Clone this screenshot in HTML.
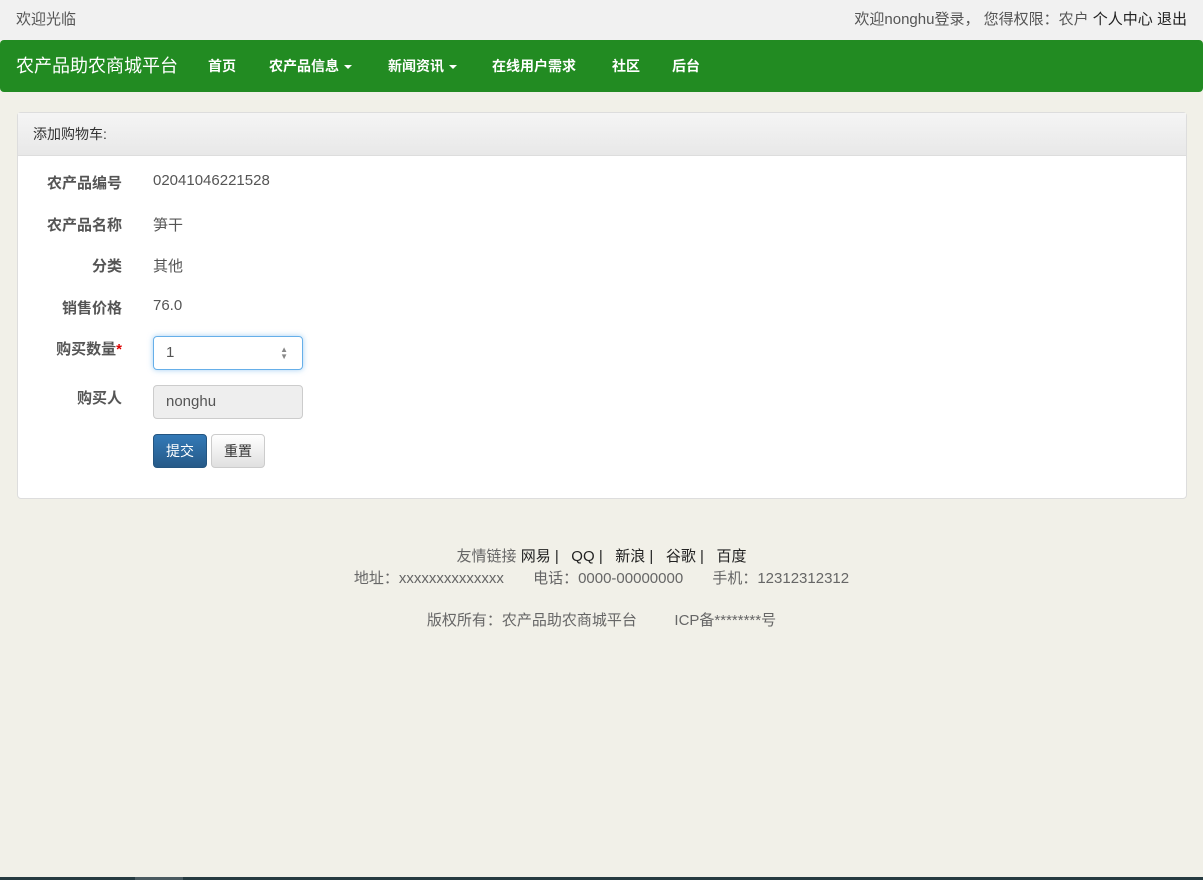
<!DOCTYPE html>
<html><head><meta charset="utf-8"><style>
*{box-sizing:border-box;margin:0;padding:0}
body{width:1203px;height:880px;background:#f1f0e8;font-family:"Liberation Sans","Noto Sans CJK SC",sans-serif;font-size:15px;color:#555;position:relative;overflow:hidden}
.top{height:40px;background:#f1f1f1;line-height:40px;padding:0 16px;color:#555}
.top .r{position:absolute;right:16px;top:0;color:#555}
.top .r a{color:#222}
.nav{position:absolute;top:40px;left:0;width:1203px;height:52px;background:#228b22;border-radius:4px;color:#fff}
.nav .brand{position:absolute;left:16px;top:0;line-height:52px;font-size:18px}
.nav .it{position:absolute;top:0;line-height:52px;font-size:14px;font-weight:bold}
.caret{display:inline-block;width:0;height:0;border-left:4px solid transparent;border-right:4px solid transparent;border-top:4px solid #fff;vertical-align:middle;margin-left:5px}
.panel{position:absolute;left:17px;top:112px;width:1170px;height:387px;background:#fff;border:1px solid #ddd;border-radius:4px}
.ph{height:43px;background:linear-gradient(#f5f5f5,#e8e8e8);border-bottom:1px solid #ddd;line-height:42px;padding-left:15px;color:#333;font-size:14px}
.lbl{position:absolute;right:1064px;font-weight:bold;color:#555;text-align:right;white-space:nowrap}
.val{position:absolute;left:135px;color:#555}
.inp{position:absolute;left:135px;width:150px;height:34px;border-radius:4px;padding-left:12px;line-height:32px;color:#555}
.btn{position:absolute;top:321px;height:34px;border-radius:4px;line-height:32px;text-align:center;font-size:14px}
.foot{position:absolute;left:0;width:1203px;text-align:center;color:#666}
.foot a{color:#222}
</style></head><body>
<div class="top">欢迎光临<span class="r">欢迎nonghu登录， 您得权限：农户 <a>个人中心</a> <a>退出</a></span></div>
<div class="nav">
<span class="brand">农产品助农商城平台</span>
<span class="it" style="left:208px">首页</span>
<span class="it" style="left:269px">农产品信息<span class="caret"></span></span>
<span class="it" style="left:388px">新闻资讯<span class="caret"></span></span>
<span class="it" style="left:492px">在线用户需求</span>
<span class="it" style="left:612px">社区</span>
<span class="it" style="left:672px">后台</span>
</div>
<div class="panel">
<div class="ph">添加购物车:</div>
<span class="lbl" style="top:59px">农产品编号</span><span class="val" style="top:59px">02041046221528</span>
<span class="lbl" style="top:101px">农产品名称</span><span class="val" style="top:101px">笋干</span>
<span class="lbl" style="top:142px">分类</span><span class="val" style="top:142px">其他</span>
<span class="lbl" style="top:184px">销售价格</span><span class="val" style="top:184px">76.0</span>
<span class="lbl" style="top:225px">购买数量<span style="color:#d00">*</span></span>
<div class="inp" style="top:223px;border:1px solid #66afe9;box-shadow:0 0 6px rgba(102,175,233,.6)">1<span style="position:absolute;right:14px;top:9px;font-size:8px;line-height:7px;color:#888">▲<br>▼</span></div>
<span class="lbl" style="top:274px">购买人</span>
<div class="inp" style="top:272px;border:1px solid #ccc;background:#eee">nonghu</div>
<div class="btn" style="left:135px;width:54px;background:linear-gradient(#337ab7,#265a88);border:1px solid #245580;color:#fff">提交</div>
<div class="btn" style="left:193px;width:54px;background:linear-gradient(#fff,#e0e0e0);border:1px solid #ccc;color:#333">重置</div>
</div>
<div class="foot" style="top:545px">友情链接 <a>网易</a> <a>|</a> &nbsp; <a>QQ</a> <a>|</a> &nbsp; <a>新浪</a> <a>|</a> &nbsp; <a>谷歌</a> <a>|</a> &nbsp; <a>百度</a></div>
<div class="foot" style="top:567px">地址：xxxxxxxxxxxxxx &nbsp; &nbsp; &nbsp; 电话：0000-00000000 &nbsp; &nbsp; &nbsp; 手机：12312312312</div>
<div class="foot" style="top:609px">版权所有：农产品助农商城平台 &nbsp; &nbsp; &nbsp; &nbsp; ICP备********号</div>
<div style="position:absolute;left:0;top:877px;width:1203px;height:3px;background:#263a40"></div>
<div style="position:absolute;left:135px;top:877px;width:48px;height:3px;background:#4a5a60"></div>
</body></html>
